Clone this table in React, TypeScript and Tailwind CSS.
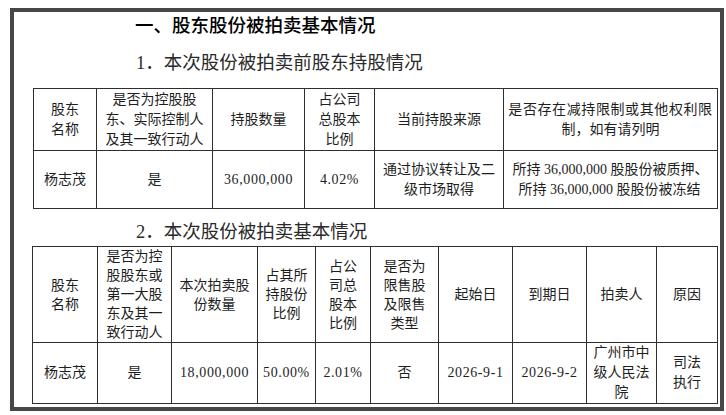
import React from "react";

const FONT = '"Liberation Serif", "Noto Sans CJK SC", serif';

function Lines({ lines }: { lines: string[] }) {
  return (
    <>
      {lines.map((l, i) => (
        <div key={i}>{l}</div>
      ))}
    </>
  );
}

function Num({ children }: { children: React.ReactNode }) {
  return <span className="tracking-[0.6px]">{children}</span>;
}

export default function App() {
  const td = "border border-[#2e2e2e] text-center align-middle p-0 text-[14px] text-[#1e1e1e]";
  return (
    <div className="w-[726px] h-[415px] bg-white overflow-hidden" style={{ fontFamily: FONT }}>
      <div className="ml-[10px] mt-[8px] w-[714px] h-[403px] border-4 border-[#474747] bg-white">
        <div
          className="pl-[121px] h-[24px] leading-[24px] text-[18.5px] text-black font-medium"
          style={{ fontFamily: '"Noto Sans CJK SC", sans-serif' }}
        >
          一、股东股份被拍卖基本情况
        </div>
        <div className="mt-[13px] pl-[122px] h-[28px] leading-[28px] text-[18.5px] text-[#2a2a2a]">
          1．本次股份被拍卖前股东持股情况
        </div>
        <table className="mt-[11px] ml-[19px] table-fixed border-collapse w-[684px]">
          <colgroup>
            <col className="w-[63px]" />
            <col className="w-[116px]" />
            <col className="w-[92px]" />
            <col className="w-[70px]" />
            <col className="w-[129px]" />
            <col className="w-[214px]" />
          </colgroup>
          <tbody>
            <tr className="h-[62px] leading-[20px]">
              <td className={td}>
                <Lines lines={["股东", "名称"]} />
              </td>
              <td className={td}>
                <Lines lines={["是否为控股股", "东、实际控制人", "及其一致行动人"]} />
              </td>
              <td className={td}>持股数量</td>
              <td className={td}>
                <Lines lines={["占公司", "总股本", "比例"]} />
              </td>
              <td className={td}>当前持股来源</td>
              <td className={td}>
                <div className="tracking-[0.6px]">是否存在减持限制或其他权利限</div>
                <div>制，如有请列明</div>
              </td>
            </tr>
            <tr className="h-[58px] leading-[20px]">
              <td className={td}>杨志茂</td>
              <td className={td}>是</td>
              <td className={td}>
                <Num>36,000,000</Num>
              </td>
              <td className={td}>
                <Num>4.02%</Num>
              </td>
              <td className={td}>
                <Lines lines={["通过协议转让及二", "级市场取得"]} />
              </td>
              <td className={td}>
                <div>所持 36,000,000 股股份被质押、</div>
                <div className="pr-[2px]">所持 36,000,000 股股份被冻结</div>
              </td>
            </tr>
          </tbody>
        </table>
        <div className="mt-[10px] pl-[122px] h-[27px] leading-[27px] text-[18.5px] text-[#2a2a2a]">
          2．本次股份被拍卖基本情况
        </div>
        <table className="ml-[18px] table-fixed border-collapse w-[685px]">
          <colgroup>
            <col className="w-[65px]" />
            <col className="w-[74px]" />
            <col className="w-[86px]" />
            <col className="w-[58px]" />
            <col className="w-[55px]" />
            <col className="w-[68px]" />
            <col className="w-[74px]" />
            <col className="w-[74px]" />
            <col className="w-[70px]" />
            <col className="w-[61px]" />
          </colgroup>
          <tbody>
            <tr className="h-[93px] leading-[19px]">
              <td className={td}>
                <Lines lines={["股东", "名称"]} />
              </td>
              <td className={td}>
                <Lines lines={["是否为控", "股股东或", "第一大股", "东及其一", "致行动人"]} />
              </td>
              <td className={td}>
                <Lines lines={["本次拍卖股", "份数量"]} />
              </td>
              <td className={td}>
                <Lines lines={["占其所", "持股份", "比例"]} />
              </td>
              <td className={td}>
                <Lines lines={["占公", "司总", "股本", "比例"]} />
              </td>
              <td className={td}>
                <Lines lines={["是否为", "限售股", "及限售", "类型"]} />
              </td>
              <td className={td}>起始日</td>
              <td className={td}>到期日</td>
              <td className={td}>拍卖人</td>
              <td className={td}>原因</td>
            </tr>
            <tr className="h-[59px] leading-[20px]">
              <td className={td}>杨志茂</td>
              <td className={td}>是</td>
              <td className={td}>
                <Num>18,000,000</Num>
              </td>
              <td className={td}>
                <Num>50.00%</Num>
              </td>
              <td className={td}>
                <Num>2.01%</Num>
              </td>
              <td className={td}>否</td>
              <td className={td}>
                <Num>2026-9-1</Num>
              </td>
              <td className={td}>
                <Num>2026-9-2</Num>
              </td>
              <td className={td}>
                <Lines lines={["广州市中", "级人民法", "院"]} />
              </td>
              <td className={td}>
                <Lines lines={["司法", "执行"]} />
              </td>
            </tr>
          </tbody>
        </table>
      </div>
    </div>
  );
}
